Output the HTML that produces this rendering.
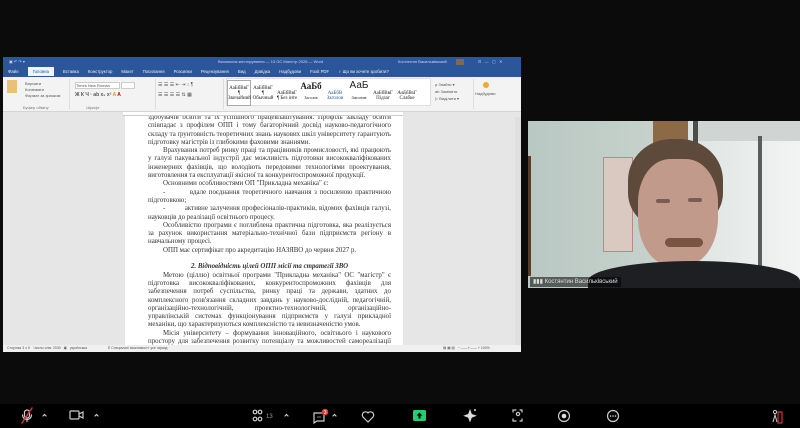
<!DOCTYPE html>
<html><head><meta charset="utf-8"><style>
*{margin:0;padding:0;box-sizing:border-box}
body{width:800px;height:428px;background:#0b0b0b;position:relative;overflow:hidden;font-family:"Liberation Sans",sans-serif}
.abs{position:absolute}
#win{left:3px;top:57px;width:518px;height:295px;background:#e6e6e6}
#title{left:0;top:0;width:518px;height:10px;background:#2b579a;color:#c9d6ea;font-size:4px;line-height:10px}
#tabs{left:0;top:10px;width:518px;height:10px;background:#2b579a;color:#e8eef8;font-size:4.3px;line-height:10px}
#tabs span{margin-right:9px}
#tabs .act{background:#f3f3f3;color:#2b579a;padding:2px 5px}
#ribbon{left:0;top:20px;width:518px;height:35px;background:#f3f3f3;border-bottom:1px solid #d4d4d4;font-size:4px;color:#555}
#ruler{left:120px;top:55px;width:280px;height:4px;background:#fff;border-bottom:1px solid #ccc}
#page{left:122px;top:59px;width:278px;height:229px;background:#fff;overflow:hidden}
#txt{position:absolute;left:23px;top:-2px;width:243px;font-family:"Liberation Serif",serif;font-size:6.9px;line-height:8.3px;color:#333;text-align:justify}
#txt p{text-indent:15px}
#status{left:0;top:288px;width:518px;height:7px;background:#f0f0f0;font-size:3.5px;color:#555;line-height:7px}
.sty{display:inline-block;width:24px;height:26px;font-family:"Liberation Serif",serif;font-size:5px;color:#222;text-align:center;padding-top:5px}
#vid{left:528px;top:121px;width:272px;height:167px;overflow:hidden;background:#c8d0c7}
</style></head><body>
<div id="win" class="abs">
 <div id="title" class="abs"><span style="margin-left:6px">▣ ↶ ↷ ▾</span><span style="position:absolute;left:215px">Визначник жестирування — 13 ОС Магістр 2026 — Word</span><span style="position:absolute;left:395px">Костянтин Васильківський</span><span style="position:absolute;left:453px;top:2px;width:8px;height:6px;background:#7a6a55"></span><span style="position:absolute;left:475px">⊡ &nbsp; — &nbsp; ▢ &nbsp; ✕</span></div>
 <div id="tabs" class="abs"><span style="margin-left:5px">Файл</span><span class="act">Головна</span><span>Вставка</span><span>Конструктор</span><span>Макет</span><span>Посилання</span><span>Розсилки</span><span>Рецензування</span><span>Вид</span><span>Довідка</span><span>Надбудови</span><span>Foxit PDF</span><span>♀ Що ви хочете зробити?</span></div>
 <div id="ribbon" class="abs">
  <div class="abs" style="left:4px;top:3px;width:10px;height:13px;background:#e9c27a"></div>
  <div class="abs" style="left:22px;top:4px;line-height:6px">Вирізати<br>Копіювати<br>Формат за зразком</div>
  <div class="abs" style="left:66px;top:2px;width:1px;height:30px;background:#ddd"></div>
  <div class="abs" style="left:72px;top:5px;width:45px;height:7px;background:#fff;border:1px solid #ccc;line-height:5px">Times New Roman</div>
  <div class="abs" style="left:118px;top:5px;width:14px;height:7px;background:#fff;border:1px solid #ccc"></div>
  <div class="abs" style="left:72px;top:15px;font-weight:bold;font-size:5px">Ж К Ч · ab x₂ x² <span style="color:#e0a000">A</span> <span style="color:#c00">A</span></div>
  <div class="abs" style="left:152px;top:2px;width:1px;height:30px;background:#ddd"></div>
  <div class="abs" style="left:155px;top:5px;font-size:5px">☰ ☰ ☰ ⇤ ⇥ ↕ ¶</div>
  <div class="abs" style="left:155px;top:15px;font-size:5px">☰ ☰ ☰ ☰ ⇅ ▦</div>
  <div class="abs" style="left:220px;top:2px;width:1px;height:30px;background:#ddd"></div>
  <div class="abs" style="left:223px;top:1px;width:205px;height:28px;background:#fff;border:1px solid #ddd">
   <span class="sty" style="border:1px solid #aaa">АаБбВвГ<br>¶ Звичайний</span><span class="sty">АаБбВвГ<br>¶ Обычный</span><span class="sty">АаБбВвГ<br>¶ Без інте</span><span class="sty" style="font-size:9px;font-weight:bold;padding-top:2px">АаБб<br><span style="font-size:4px;font-weight:normal">Заголов</span></span><span class="sty" style="color:#2b579a">АаБбВ<br>Заголов</span><span class="sty" style="font-size:10px;padding-top:1px;font-family:'Liberation Sans'">АаБ<br><span style="font-size:4px">Заголов</span></span><span class="sty">АаБбВвГ<br>Підзаг</span><span class="sty"><i>АаБбВвГ</i><br>Слабке</span></div>
  <div class="abs" style="left:432px;top:4px;line-height:7px">ρ Знайти ▾<br>ab Замінити<br>▷ Виділити ▾</div>
  <div class="abs" style="left:470px;top:2px;width:1px;height:30px;background:#ddd"></div>
  <div class="abs" style="left:480px;top:5px;width:6px;height:6px;border-radius:3px;background:#f0a830"></div>
  <div class="abs" style="left:472px;top:14px">Надбудови</div>
  <div class="abs" style="left:20px;top:28px;color:#777">Буфер обміну &nbsp;&nbsp;&nbsp;&nbsp;&nbsp;&nbsp;&nbsp;&nbsp;&nbsp;&nbsp;&nbsp;&nbsp;&nbsp;&nbsp;&nbsp;&nbsp;&nbsp;&nbsp;&nbsp;&nbsp;&nbsp;&nbsp;&nbsp;&nbsp;&nbsp;&nbsp;&nbsp;&nbsp;&nbsp;&nbsp;&nbsp;&nbsp; Шрифт</div>
 </div>
 <div id="ruler" class="abs"></div>
 <div id="page" class="abs"><div id="txt">
 здобувачів освіти та їх успішного працевлаштування. Профіль закладу освіти співпадає з профілем ОПП і тому багаторічний досвід науково-педагогічного складу та ґрунтовність теоретичних знань наукових шкіл університету гарантують підготовку магістрів із глибокими фаховими знаннями.
 <p>Врахування потреб ринку праці та працівників промисловості, які працюють у галузі пакувальної індустрії дає можливість підготовки висококваліфікованих інженерних фахівців, що володіють передовими технологіями проектування, виготовлення та експлуатації якісної та конкурентоспроможної продукції.</p>
 <p>Основними особливостями ОП "Прикладна механіка" є:</p>
 <p>- &nbsp;&nbsp;&nbsp;&nbsp;&nbsp;&nbsp;&nbsp; вдале поєднання теоретичного навчання з посиленою практичною підготовкою;</p>
 <p>- &nbsp;&nbsp;&nbsp;&nbsp;&nbsp;&nbsp;&nbsp; активне залучення професіоналів-практиків, відомих фахівців галузі, науковців до реалізації освітнього процесу.</p>
 <p>Особливістю програми є поглиблена практична підготовка, яка реалізується за рахунок використання матеріально-технічної бази підприємств регіону в навчальному процесі.</p>
 <p>ОПП має сертифікат про акредитацію НАЗЯВО до червня 2027 р.</p>
 <div style="height:8.3px"></div>
 <div style="text-align:center;font-weight:bold;font-style:italic">2. Відповідність цілей ОПП місії та стратегії ЗВО</div>
 <p>Метою (ціллю) освітньої програми "Прикладна механіка" ОС "магістр" є підготовка висококваліфікованих, конкурентоспроможних фахівців для забезпечення потреб суспільства, ринку праці та держави, здатних до комплексного розв'язання складних завдань у науково-дослідній, педагогічній, організаційно-технологічній, проектно-технологічній, організаційно-управлінській системах функціонування підприємств у галузі прикладної механіки, що характеризуються комплексністю та невизначеністю умов.</p>
 <p>Місія університету – формування інноваційного, освітнього і наукового простору для забезпечення розвитку потенціалу та можливостей самореалізації університетської спільноти в процесі їх спільної освітньої, наукової, інноваційної та</p>
 </div></div>
 <div class="abs" style="left:512px;top:60px;width:6px;height:228px;background:#e0e0e0"></div>
 <div id="status" class="abs"><span style="margin-left:4px">Сторінка 3 з 9 &nbsp;&nbsp; Число слів: 2030 &nbsp; ▣ &nbsp; українська</span><span style="position:absolute;left:105px">Ѐ Спеціальні можливості: усе гаразд</span><span style="position:absolute;left:440px">▤ ▦ ▧ &nbsp; − ——+—— + 100%</span></div>
</div>

<div id="vid" class="abs">
 <div class="abs" style="left:0;top:0;width:272px;height:167px;background:linear-gradient(90deg,#b9c8c3 0%,#c6d1cb 45%,#dfe5e3 62%,#f2f4f3 100%)"></div>
 <div class="abs" style="left:125px;top:0;width:35px;height:25px;background:#8c6a48"></div>
 <div class="abs" style="left:165px;top:0;width:5px;height:167px;background:#4a4d4c"></div>
 <div class="abs" style="left:170px;top:0;width:102px;height:20px;background:#d0d4d2"></div>
 <div class="abs" style="left:230px;top:15px;width:4px;height:152px;background:#5a5e5c"></div>
 <div class="abs" style="left:75px;top:36px;width:30px;height:95px;background:#d9c9c0;border:1px solid #b88"></div>
 <div class="abs" style="left:0;top:35px;width:3px;height:120px;background:#5a3a2a"></div>
 <div class="abs" style="left:100px;top:18px;width:95px;height:90px;border-radius:46% 46% 40% 40%;background:#5e4a3a"></div>
 <div class="abs" style="left:110px;top:38px;width:80px;height:108px;border-radius:40% 40% 45% 45%;background:#c29a8c"></div>
 <div class="abs" style="left:128px;top:78px;width:14px;height:4px;border-radius:2px;background:#7b5c52"></div>
 <div class="abs" style="left:160px;top:77px;width:14px;height:4px;border-radius:2px;background:#7b5c52"></div>
 <div class="abs" style="left:137px;top:117px;width:38px;height:9px;border-radius:5px;background:#7a5442"></div>
 <div class="abs" style="left:60px;top:140px;width:212px;height:40px;border-radius:50% 50% 0 0;background:#1d1f22"></div>
 <div class="abs" style="left:2px;top:156px;height:10px;padding:0 3px;background:rgba(0,0,0,.55);color:#ddd;font-size:6px;line-height:10px">▮▮▮ Костянтин Васильківський</div>
</div>

<div class="abs" style="left:0;top:404px;width:800px;height:24px;background:#000"></div>
<svg class="abs" style="left:0;top:404px" width="800" height="24">
 <g fill="none" stroke="#ccc" stroke-width="1.2" stroke-linecap="round">
  <rect x="24.5" y="6" width="5" height="8" rx="2.5"/><path d="M22.5 11a4.5 4.5 0 0 0 9 0M27 15.5v2"/>
  <path d="M22 19L32 4" stroke="#e0303a" stroke-width="1.5"/>
  <path d="M43 12l1.5-1.5L46 12M95 12l1.5-1.5L98 12M285 12l1.5-1.5L288 12M333 12l1.5-1.5L336 12"/>
  <rect x="70" y="7" width="9" height="8" rx="1"/><path d="M79 10l4-2v6l-4-2"/>
  <circle cx="255" cy="8" r="1.8"/><circle cx="260" cy="8" r="1.8"/><circle cx="255" cy="15" r="1.8"/><circle cx="260" cy="15" r="1.8"/>
  <path d="M314 9h10v8h-7l-3 2z"/>
  <path d="M368 18l-5-5a3 3 0 0 1 5-4a3 3 0 0 1 5 4z"/>
  <path d="M513 8v-2h3M520 6h2v2M513 15v2h3M520 17h2v-2"/><circle cx="518" cy="10" r="1.6"/>
  <circle cx="564" cy="12" r="5.5"/>
  <circle cx="613" cy="12" r="5.5"/>
  <path d="M778 8h4v11h-4z" stroke="#d03040"/>
 </g>
 <text x="266" y="14" fill="#999" font-size="6" font-family="Liberation Sans">13</text>
 <circle cx="325" cy="8" r="3.3" fill="#e0383c"/><text x="323.7" y="10" fill="#fff" font-size="5" font-family="Liberation Sans">3</text>
 <rect x="413" y="6" width="13" height="11" rx="1.5" fill="#1fcf73"/><path d="M419.5 8.5l-3 3h2v3h2v-3h2z" fill="#000"/>
 <path d="M470 5l1.8 5 5 1.8-5 1.8-1.8 5-1.8-5-5-1.8 5-1.8z" fill="#ddd"/><circle cx="475" cy="6" r="1" fill="#ddd"/>
 <circle cx="564" cy="12" r="2.3" fill="#ddd"/>
 <g fill="#ddd"><circle cx="610.5" cy="12" r=".8"/><circle cx="613" cy="12" r=".8"/><circle cx="615.5" cy="12" r=".8"/><circle cx="318" cy="13" r=".6"/><circle cx="320" cy="13" r=".6"/></g>
 <circle cx="775" cy="8" r="1.6" fill="none" stroke="#ccc"/><path d="M773 18l2-7 2 7" stroke="#ccc" fill="none"/>
</svg>
</body></html>
